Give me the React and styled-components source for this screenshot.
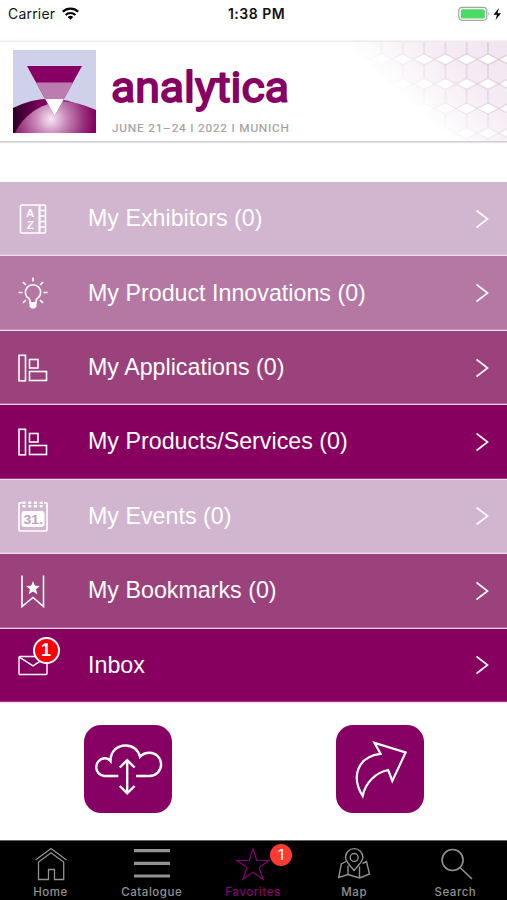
import React from 'react';
import styled, { createGlobalStyle } from 'styled-components';

const GlobalStyle = createGlobalStyle`
    * {
        box-sizing: border-box;
    }
    body {
        margin: 0;
        background: #fff;
        font-family: "Liberation Sans", Arial, sans-serif;
    }
`;

const Screen = styled.div`
    display: flex;
    flex-direction: column;
    width: 507px;
    height: 900px;
    overflow: hidden;
    background: #fff;
`;

const StatusBar = styled.div`
    display: grid;
    grid-template-columns: 1fr auto 1fr;
    align-items: center;
    height: 41px;
    padding: 0 5px 14px 8px;
    font-family: Inter, sans-serif;
    font-size: 14px;
    color: #111;
`;

const Carrier = styled.div`
    display: flex;
    align-items: center;
    gap: 7px;
    letter-spacing: 0.2px;
`;

const Time = styled.div`
    padding-left: 3px;
    font-weight: 600;
    letter-spacing: 0.5px;
`;

const Battery = styled.div`
    display: flex;
    justify-content: flex-end;
`;

const Banner = styled.header`
    display: flex;
    justify-content: space-between;
    height: 101px;
    border-top: 1px solid #ececec;
    border-bottom: 1px solid #cfcfcf;
    box-shadow: 0 1px 1px #e4e4e4, 0 -1px 1px #f4f4f4;
    margin-bottom: 40px;
`;

const Brand = styled.div`
    display: flex;
    gap: 15px;
    padding: 8px 0 0 13px;
`;

const List = styled.nav`
    display: flex;
    flex-direction: column;
    height: 521px;
`;

const Row = styled.a`
    flex: 1;
    display: grid;
    grid-template-columns: 73px 1fr auto;
    align-items: center;
    padding: 0 18px 0 15px;
    background: ${props => props.$color};
    border-bottom: 1px solid #f0d9ec;
    box-shadow: inset 0 -1px 0 rgba(255, 255, 255, 0.22);
    color: #fff;
    font-size: 23.25px;
`;

const IconSlot = styled.span`
    position: relative;
    display: flex;
    width: 36px;
    height: 36px;
`;

const InboxBadge = styled.span`
    position: absolute;
    left: 17.5px;
    top: -10.5px;
    display: flex;
    align-items: center;
    justify-content: center;
    width: 27px;
    height: 27px;
    border: 2px solid #fff;
    border-radius: 50%;
    background: #fb0007;
    font-size: 18px;
    font-weight: bold;
`;

const Actions = styled.div`
    flex: 1;
    display: flex;
    justify-content: space-between;
    padding: 22px 83px 0 84px;
`;

const ActionButton = styled.button`
    width: 88px;
    height: 88px;
    padding: 0;
    border: 0;
    border-radius: 17px;
    background: #870064;
    color: #fff;
`;

const TabBar = styled.nav`
    display: grid;
    grid-template-columns: repeat(5, 1fr);
    height: 60px;
    padding: 0 1px 0 0;
    background: #000;
    border-top: 1px solid #666;
`;

const Tab = styled.a`
    display: flex;
    flex-direction: column;
    align-items: center;
    padding-top: 5px;
    color: ${props => (props.$active ? '#870073' : '#929292')};
    font-family: Inter, sans-serif;
    font-size: 11.5px;
    font-weight: 500;
    line-height: 20px;
    letter-spacing: 0.55px;
`;

const TabIcon = styled.span`
    position: relative;
    display: flex;
`;

const TabBadge = styled.span`
    position: absolute;
    left: 35px;
    top: -2px;
    width: 22px;
    height: 22px;
    border-radius: 50%;
    background: #ff3b30;
    color: #fff;
    font-size: 15px;
    font-weight: 400;
    line-height: 22px;
    letter-spacing: 0;
    text-align: center;
`;

const LineIcon = ({ size = 36, width = 1.6, children }) => (
    <svg width={size} height={size} viewBox={`0 0 ${size} ${size}`} fill="none" stroke="currentColor" strokeWidth={width}>
        {children}
    </svg>
);

const ExhibitorsIcon = () => (
    <LineIcon>
        <rect x="5.5" y="4" width="25" height="28" rx="1" />
        <path d="M24.5 4v28" strokeWidth="2.2" />
        <path d="M24.5 9.5h6M24.5 15h6M24.5 20.5h6M24.5 26h6" />
        <g fill="currentColor" stroke="none" fontFamily="Liberation Sans" fontWeight="bold" fontSize="11.5" textAnchor="middle">
            <text x="15.2" y="16.2">A</text>
            <text x="15.2" y="28.2">Z</text>
        </g>
    </LineIcon>
);

const BulbIcon = () => (
    <LineIcon>
        <path d="M15 28V25.5Q15 24.6 14 23.8A7.6 7.6 0 1 1 22 23.8Q21 24.6 21 25.5V28z" />
        <path d="M14.5 27.5h7v4l-2 2h-3l-2-2z" fill="currentColor" stroke="none" />
        <path d="M18 2.5v4M8 7.2l3 2.8M28 7.2l-3 2.8M3.5 17.5h4M28.5 17.5h4M8 27.8l3-2.8M28 27.8l-3-2.8" />
    </LineIcon>
);

const BlocksIcon = () => (
    <LineIcon>
        <rect x="4" y="5.3" width="6.5" height="25.5" />
        <rect x="14.5" y="9.5" width="8.5" height="8.5" />
        <rect x="14.5" y="21.5" width="17" height="9" />
    </LineIcon>
);

const EventsIcon = () => (
    <LineIcon>
        <path d="M7 4.8H5a1 1 0 0 0-1 1V32a1 1 0 0 0 1 1h26a1 1 0 0 0 1-1V5.8a1 1 0 0 0-1-1h-2" />
        <path d="M9 3.5v6M14.7 3.5v6M20.4 3.5v6M26.1 3.5v6" strokeWidth="3" strokeDasharray="2.5 1" />
        <rect x="6.5" y="13" width="23" height="16" rx="3" fill="currentColor" stroke="none" />
        <text x="18.3" y="25.5" fill="#c3a0be" stroke="none" fontFamily="Liberation Sans" fontWeight="bold" fontSize="12.5" textAnchor="middle" textLength="19.5" lengthAdjust="spacingAndGlyphs">31.</text>
    </LineIcon>
);

const BookmarkIcon = () => (
    <LineIcon>
        <path d="M7 2.5V33.5L18 24.5L28.5 33.5V2.5" />
        <path d="M18 8l1.9 4.8 5.1.3-4 3.2 1.4 5-4.4-2.8-4.4 2.8 1.4-5-4-3.2 5.1-.3z" fill="currentColor" stroke="none" />
    </LineIcon>
);

const InboxIcon = () => (
    <LineIcon width={1.4}>
        <rect x="4" y="9.5" width="28" height="18" rx="1" />
        <path d="M4 9.8L18 18.8L32 9.8" />
    </LineIcon>
);

const Chevron = () => (
    <svg width="14" height="20" viewBox="0 0 14 20" fill="none" stroke="#fff" strokeWidth="1.6">
        <path d="M1.500 1.500L12.600 10L1.500 18.500" />
    </svg>
);

const CloudIcon = () => (
    <LineIcon size={88} width={2.4}>
        <path d="M34.3 51H20.2A8.9 8.9 0 0 1 20.2 33.3Q24 33 26.5 36C26.5 26.5 33 20.5 41.5 20.5C48.5 20.5 54.5 24.8 56 31.8C58.5 29 62 27.8 65.5 27.8A11.6 11.6 0 0 1 65.5 51H52" />
        <path d="M43.2 35.5V68M35.8 42.5L43.2 35.2L50.6 42.5M35.8 61L43.2 68.3L50.6 61" />
    </LineIcon>
);

const ShareIcon = () => (
    <LineIcon size={88} width={2.2}>
        <path d="M38.5 17.9L69.6 27.5L56.3 56L52.2 45C40 47.5 29.5 57 26.6 71C14 50 23 31.5 44.6 28.9z" />
    </LineIcon>
);

const HomeIcon = () => (
    <LineIcon width={1.3}>
        <path d="M2.5 14L18 2.5L33.5 14" />
        <path d="M5.5 33.5V16L18 6.8L30.7 16V33.5H21.5V23.5H15.5V33.5z" />
    </LineIcon>
);

const CatalogueIcon = () => (
    <LineIcon width={3.2}>
        <path d="M0 4.7H36M0 17.3H36M0 30H36" />
    </LineIcon>
);

const StarIcon = () => (
    <LineIcon width={1.2}>
        <path d="M18 3l3.8 11.5h12L24.1 21.6l4 11.7L18 26.3 7.9 33.3l4-11.7L2.2 14.5h12z" />
    </LineIcon>
);

const MapIcon = () => (
    <LineIcon width={1.4}>
        <path d="M18 24.5C13.5 19 9.5 15.5 9.5 11.3a8.7 8.7 0 0 1 17.4 0C26.9 15.5 22.5 19 18 24.5z" />
        <circle cx="18.2" cy="11.5" r="4" />
        <path d="M10 15.5L5.3 18L2.7 31.5L12 28.5L23.5 32L33.5 28L30.5 15.5L26.5 17.5M12 19.5V28.5M23.5 20.5V32" />
    </LineIcon>
);

const SearchIcon = () => (
    <LineIcon width={1.6}>
        <circle cx="15.6" cy="14" r="10.5" />
        <path d="M23 21.5L35 33" />
    </LineIcon>
);

const Logo = () => (
    <svg width="83" height="83" viewBox="0 0 83 83">
        <defs>
            <linearGradient id="back" x1="0" x2="1">
                <stop offset="0" stopColor="#2b0024" />
                <stop offset="0.4" stopColor="#800060" />
            </linearGradient>
            <radialGradient id="glow" gradientUnits="userSpaceOnUse" cx="38" cy="69" r="44">
                <stop offset="0" stopColor="#f8e8f5" />
                <stop offset="0.35" stopColor="#c888b8" />
                <stop offset="0.75" stopColor="#98307e" />
                <stop offset="1" stopColor="#850060" />
            </radialGradient>
        </defs>
        <path d="M0 0H83V83H0z" fill="#cfd1ea" />
        <path d="M0 58Q36 40 72 57L60 83H0z" fill="url(#back)" />
        <path d="M2 83C10 66 26 54 48 51Q66 52 83 60V83z" fill="url(#glow)" />
        <path d="M14 16H69L41.5 66z" fill="#870064" />
        <path d="M23 32.5H60L50.9 49H32.2z" fill="#bd7caf" />
        <path d="M32.2 49H50.9L41.5 66z" fill="#fff" />
    </svg>
);

const Wordmark = () => (
    <svg width="180" height="90" viewBox="0 0 180 90">
        <text x="0" y="52" fill="#870064" stroke="#870064" strokeWidth="1.8" strokeLinejoin="round" fontFamily="Roboto" fontSize="43" textLength="178" lengthAdjust="spacingAndGlyphs">analytica</text>
        <text x="1" y="82" fill="#a0a0a0" stroke="#a0a0a0" strokeWidth="0.2" fontFamily="Roboto" fontSize="11.8" textLength="177">JUNE 21–24 I 2022 I MUNICH</text>
    </svg>
);

// hexagon mesh, fading out to the lower left
const Mesh = () => (
    <svg width="167" height="99" viewBox="340 42 167 99">
        <defs>
            <pattern id="hex" patternUnits="userSpaceOnUse" x="477.3" y="47" width="21.3" height="24.6">
                <path d="M0 0H21.3V24.6H0z" fill="#f1e5ef" />
                <path d="M10.65 6.8L21.3 12.3L10.65 17.8L0 12.3z" fill="#fff" />
                <path d="M10.65 0V6.8L21.3 12.3L10.65 17.8V24.6M10.65 6.8L0 12.3L10.65 17.8" fill="none" stroke="#cfadc8" strokeWidth="0.9" />
            </pattern>
            <linearGradient id="fade" gradientUnits="userSpaceOnUse" x1="507" y1="42" x2="430" y2="123.5">
                <stop offset="0" stopColor="#fff" />
                <stop offset="0.5" stopColor="#fff" stopOpacity="0.7" />
                <stop offset="1" stopColor="#fff" stopOpacity="0" />
            </linearGradient>
            <mask id="fadeMask">
                <path d="M340 42H507V141H340z" fill="url(#fade)" />
            </mask>
        </defs>
        <path d="M340 42H507V141H340z" fill="url(#hex)" mask="url(#fadeMask)" />
    </svg>
);

const rows = [
    { label: 'My Exhibitors (0)', color: '#d2b5cf', Icon: ExhibitorsIcon },
    { label: 'My Product Innovations (0)', color: '#b577a3', Icon: BulbIcon },
    { label: 'My Applications (0)', color: '#9b417c', Icon: BlocksIcon },
    { label: 'My Products/Services (0)', color: '#870060', Icon: BlocksIcon },
    { label: 'My Events (0)', color: '#d2b5cf', Icon: EventsIcon },
    { label: 'My Bookmarks (0)', color: '#9b417c', Icon: BookmarkIcon },
    { label: 'Inbox', color: '#870060', Icon: InboxIcon, badge: 1 },
];

const tabs = [
    { label: 'Home', Icon: HomeIcon },
    { label: 'Catalogue', Icon: CatalogueIcon },
    { label: 'Favorites', Icon: StarIcon, active: true, badge: 1 },
    { label: 'Map', Icon: MapIcon },
    { label: 'Search', Icon: SearchIcon },
];

const App = () => {
    return (
        <>
            <GlobalStyle />
            <Screen>
                <StatusBar>
                    <Carrier>
                        Carrier
                        <svg width="17" height="13" viewBox="0 0 17 13" fill="none" stroke="#000" strokeWidth="2.2">
                            <path d="M0.8 4.8a11 11 0 0 1 15.4 0M3.6 8a7 7 0 0 1 9.8 0" />
                            <path d="M8.5 12.8L5.7 10a4 4 0 0 1 5.6 0z" fill="#000" stroke="none" />
                        </svg>
                    </Carrier>
                    <Time>1:38 PM</Time>
                    <Battery>
                        <svg width="44" height="16" viewBox="0 0 44 16">
                            <rect x="0.8" y="1.3" width="28" height="13" rx="3.5" fill="#fff" stroke="#a5a5a5" strokeWidth="1.2" />
                            <rect x="2.8" y="3.2" width="24" height="9.2" rx="1.5" fill="#4cd964" />
                            <path d="M30.3 5.8q2 2 0 4z" fill="#a5a5a5" />
                            <path d="M41 2L35.5 8.8H39L37.5 14L43 7.2H39.5z" fill="#000" />
                        </svg>
                    </Battery>
                </StatusBar>
                <Banner>
                    <Brand>
                        <Logo />
                        <Wordmark />
                    </Brand>
                    <Mesh />
                </Banner>
                <List>
                    {rows.map(({ label, color, Icon, badge }) => (
                        <Row key={label} $color={color}>
                            <IconSlot>
                                <Icon />
                                {badge && <InboxBadge>{badge}</InboxBadge>}
                            </IconSlot>
                            <span>{label}</span>
                            <Chevron />
                        </Row>
                    ))}
                </List>
                <Actions>
                    <ActionButton><CloudIcon /></ActionButton>
                    <ActionButton><ShareIcon /></ActionButton>
                </Actions>
                <TabBar>
                    {tabs.map(({ label, Icon, active, badge }) => (
                        <Tab key={label} $active={active}>
                            <TabIcon>
                                <Icon />
                                {badge && <TabBadge>{badge}</TabBadge>}
                            </TabIcon>
                            {label}
                        </Tab>
                    ))}
                </TabBar>
            </Screen>
        </>
    );
};

export default App;
